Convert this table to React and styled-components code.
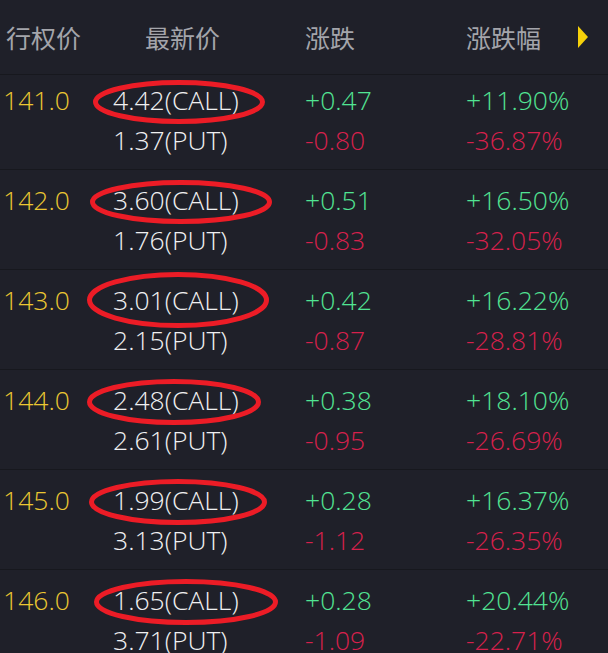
import React from 'react';
import styled, { createGlobalStyle } from 'styled-components';

const GlobalStyle = createGlobalStyle`
  html, body {
    margin: 0;
    padding: 0;
    background: #1f2029;
  }
  body {
    font-family: "Open Sans", "Noto Sans", "Noto Sans CJK SC", sans-serif;
  }
`;

const Page = styled.div`
  width: 608px;
  height: 653px;
  overflow: hidden;
  background: #1f2029;
`;

const Header = styled.div`
  display: grid;
  grid-template-columns: 113px 192px 161px 1fr;
  align-items: center;
  height: 75px;
  border-bottom: 1px solid #17181e;
  box-sizing: border-box;
`;

const HeadCell = styled.div`
  padding-left: ${props => props.pad || 0}px;
  font-family: "Noto Sans CJK SC", "Noto Sans", sans-serif;
  font-size: 25px;
  color: #a4a5ab;
  display: flex;
  align-items: center;
  justify-content: space-between;
`;

const Arrow = styled.span`
  width: 0;
  height: 0;
  margin-right: 20px;
  border-top: 11px solid transparent;
  border-bottom: 11px solid transparent;
  border-left: 10px solid #f6d10a;
`;

const Row = styled.div`
  display: grid;
  grid-template-columns: 113px 192px 161px 1fr;
  grid-auto-rows: 40px;
  align-items: center;
  padding: ${props => (props.first ? 5 : 10)}px 0 10px;
  height: ${props => (props.first ? 95 : 100)}px;
  box-sizing: border-box;
  border-bottom: 1px solid #17181e;
  font-size: 26.5px;
  font-weight: 300;
`;

const Strike = styled.div`
  padding-left: 3px;
  color: #ebc732;
`;

const Price = styled.div`
  position: relative;
  color: #f0f0f2;
`;

const Change = styled.div`
  color: ${props => (props.up ? '#52e493' : '#d6204c')};
`;

const Ring = styled.svg`
  position: absolute;
  pointer-events: none;
  overflow: visible;
`;

const rows = [
  { strike: '141.0', call: '4.42', put: '1.37', cc: '+0.47', cp: '+11.90%', pc: '-0.80', pp: '-36.87%', ring: [66, 0, 86, 22] },
  { strike: '142.0', call: '3.60', put: '1.76', cc: '+0.51', cp: '+16.50%', pc: '-0.83', pp: '-32.05%', ring: [68, 0, 91, 22] },
  { strike: '143.0', call: '3.01', put: '2.15', cc: '+0.42', cp: '+16.22%', pc: '-0.87', pp: '-28.81%', ring: [65, -2, 91, 28] },
  { strike: '144.0', call: '2.48', put: '2.61', cc: '+0.38', cp: '+18.10%', pc: '-0.95', pp: '-26.69%', ring: [61, 0, 87, 23] },
  { strike: '145.0', call: '1.99', put: '3.13', cc: '+0.28', cp: '+16.37%', pc: '-1.12', pp: '-26.35%', ring: [65, 0, 89, 23] },
  { strike: '146.0', call: '1.65', put: '3.71', cc: '+0.28', cp: '+20.44%', pc: '-1.09', pp: '-22.71%', ring: [73, 0, 92, 23] },
];

// ring = [centre x, centre y offset, rx, ry] relative to the price cell
const Circled = ({ ring, children }) => {
  const [cx, dy, rx, ry] = ring;
  return (
    <Price>
      {children}
      <Ring
        width={rx * 2}
        height={ry * 2}
        style={{ left: cx - rx, top: 20 + dy - ry }}
      >
        <ellipse cx={rx} cy={ry} rx={rx - 2.5} ry={ry - 2.5} fill="none" stroke="#ec1c26" strokeWidth="5" />
      </Ring>
    </Price>
  );
};

const App = () => (
  <Page>
    <GlobalStyle />
    <Header>
      <HeadCell pad={6}>行权价</HeadCell>
      <HeadCell pad={32}>最新价</HeadCell>
      <HeadCell>涨跌</HeadCell>
      <HeadCell>涨跌幅<Arrow /></HeadCell>
    </Header>
    {rows.map((r, i) => (
      <Row key={r.strike} first={i === 0}>
        <Strike>{r.strike}</Strike>
        <Circled ring={r.ring}>{r.call}(CALL)</Circled>
        <Change up>{r.cc}</Change>
        <Change up>{r.cp}</Change>
        <div />
        <Price>{r.put}(PUT)</Price>
        <Change>{r.pc}</Change>
        <Change>{r.pp}</Change>
      </Row>
    ))}
  </Page>
);

export default App;
